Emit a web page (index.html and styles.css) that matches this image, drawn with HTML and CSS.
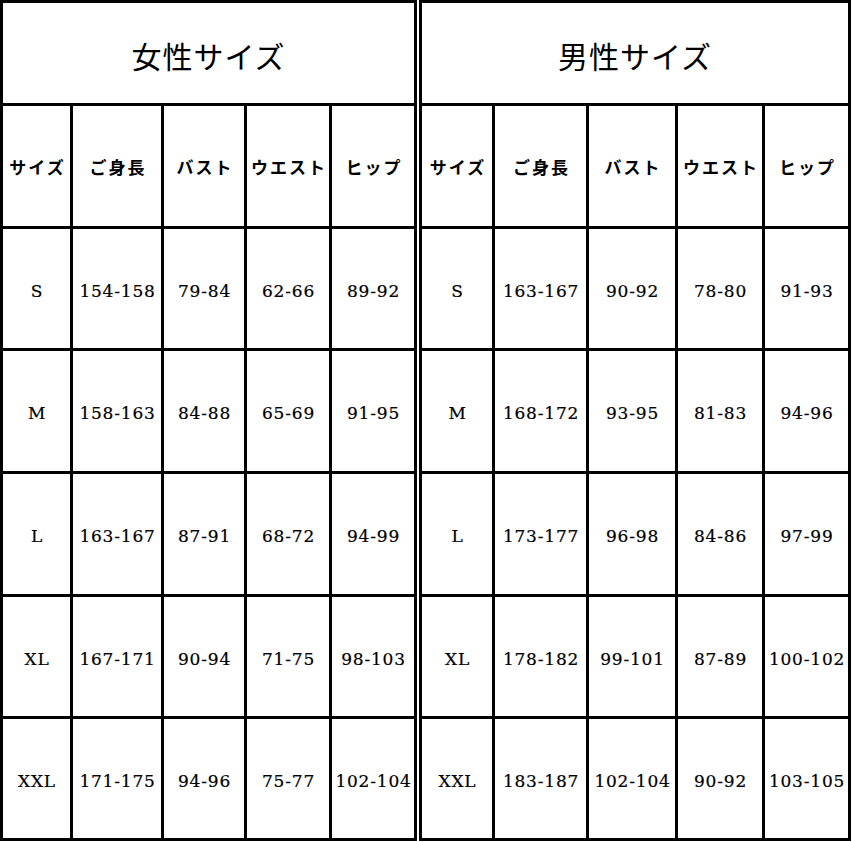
FILE: index.html
```html
<!DOCTYPE html>
<html lang="ja">
<head>
<meta charset="utf-8">
<title>サイズ表</title>
<link rel="stylesheet" href="styles.css">
</head>
<body>
<div class="page">
  <div class="chart chart-women">
    <div class="title">女性サイズ</div>
    <div class="cell head">サイズ</div>
    <div class="cell head">ご身長</div>
    <div class="cell head">バスト</div>
    <div class="cell head">ウエスト</div>
    <div class="cell head">ヒップ</div>

    <div class="cell num">S</div><div class="cell num">154-158</div><div class="cell num">79-84</div><div class="cell num">62-66</div><div class="cell num">89-92</div>
    <div class="cell num">M</div><div class="cell num">158-163</div><div class="cell num">84-88</div><div class="cell num">65-69</div><div class="cell num">91-95</div>
    <div class="cell num">L</div><div class="cell num">163-167</div><div class="cell num">87-91</div><div class="cell num">68-72</div><div class="cell num">94-99</div>
    <div class="cell num">XL</div><div class="cell num">167-171</div><div class="cell num">90-94</div><div class="cell num">71-75</div><div class="cell num">98-103</div>
    <div class="cell num">XXL</div><div class="cell num">171-175</div><div class="cell num">94-96</div><div class="cell num">75-77</div><div class="cell num">102-104</div>
  </div>
  <div class="chart chart-men">
    <div class="title">男性サイズ</div>
    <div class="cell head">サイズ</div>
    <div class="cell head">ご身長</div>
    <div class="cell head">バスト</div>
    <div class="cell head">ウエスト</div>
    <div class="cell head">ヒップ</div>

    <div class="cell num">S</div><div class="cell num">163-167</div><div class="cell num">90-92</div><div class="cell num">78-80</div><div class="cell num">91-93</div>
    <div class="cell num">M</div><div class="cell num">168-172</div><div class="cell num">93-95</div><div class="cell num">81-83</div><div class="cell num">94-96</div>
    <div class="cell num">L</div><div class="cell num">173-177</div><div class="cell num">96-98</div><div class="cell num">84-86</div><div class="cell num">97-99</div>
    <div class="cell num">XL</div><div class="cell num">178-182</div><div class="cell num">99-101</div><div class="cell num">87-89</div><div class="cell num">100-102</div>
    <div class="cell num">XXL</div><div class="cell num">183-187</div><div class="cell num">102-104</div><div class="cell num">90-92</div><div class="cell num">103-105</div>
  </div>
</div>
</body>
</html>
```

FILE: styles.css
```css
html, body {
  margin: 0;
  padding: 0;
  background: #fff;
}

.page {
  display: flex;
  gap: 2px;
  width: 852px;
  height: 842px;
  align-items: flex-start;
}

.chart {
  display: grid;
  background: #000;
  padding: 3px;
  gap: 3px;
  grid-template-rows: 100px 120px 119px 120px 120px 119px 119px;
}

.chart-women {
  grid-template-columns: 67px 88px 80px 82px 82px;
}

.chart-men {
  grid-template-columns: 70px 91px 86px 84px 83px;
}

.title {
  grid-column: 1 / -1;
  background: #fff;
  display: flex;
  align-items: center;
  justify-content: center;
  padding-top: 4px;
  font-family: "Noto Sans CJK JP", sans-serif;
  font-size: 30px;
  font-weight: 400;
  letter-spacing: 1px;
  color: #000;
}

.cell {
  background: #fff;
  display: flex;
  align-items: center;
  justify-content: center;
  color: #000;
  white-space: nowrap;
}

.head {
  font-family: "Noto Sans CJK JP", sans-serif;
  font-size: 17px;
  font-weight: 700;
  letter-spacing: 2px;
  padding-left: 2px;
}

.num {
  font-family: "DejaVu Serif", serif;
  font-size: 17px;
  letter-spacing: 0.8px;
  padding-top: 4px;
  padding-left: 1px;
  -webkit-text-stroke: 0.2px #000;
}
```
